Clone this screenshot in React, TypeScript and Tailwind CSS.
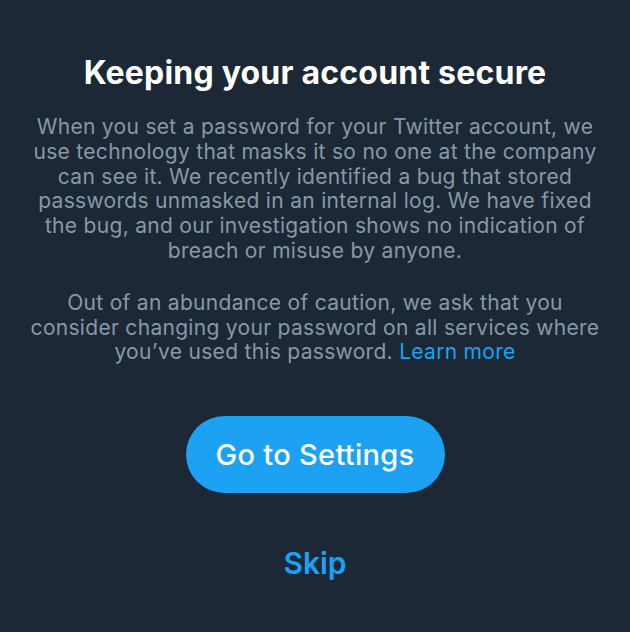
export default function App() {
  return (
    <div className="w-[630px] h-[632px] bg-[#1c2836] flex flex-col items-center overflow-hidden" style={{ fontFamily: 'Inter, "Noto Sans", sans-serif' }}>
      <h1 className="mt-[53px] text-[32px] leading-[40px] font-bold text-white tracking-[0.2px]">Keeping your account secure</h1>
      <div className="mt-[22px] text-center text-[21px] leading-[24.8px] tracking-[0.3px] text-[#8899a6] whitespace-nowrap">
        <p>
          When you set a password for your Twitter account, we<br />
          use technology that masks it so no one at the company<br />
          can see it. We recently identified a bug that stored<br />
          passwords unmasked in an internal log. We have fixed<br />
          the bug, and our investigation shows no indication of<br />
          breach or misuse by anyone.
        </p>
        <p className="mt-[27px]">
          Out of an abundance of caution, we ask that you<br />
          consider changing your password on all services where<br />
          you’ve used this password. <a className="text-[#1da1f2]">Learn more</a>
        </p>
      </div>
      <button className="mt-[51px] w-[259px] h-[77px] rounded-full bg-[#1da1f2] text-white text-[29px] tracking-[0.3px] font-medium">
        Go to Settings
      </button>
      <button className="mt-[50px] text-[#1da1f2] text-[30px] leading-[40px] font-semibold">Skip</button>
    </div>
  )
}
